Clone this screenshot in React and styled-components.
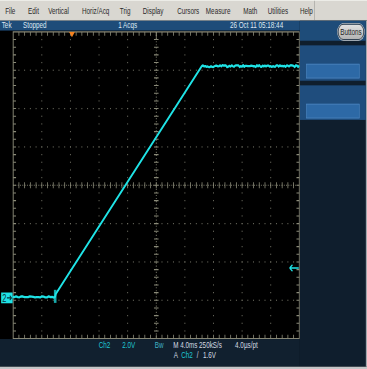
import styled, { createGlobalStyle } from "styled-components";

// the scope screen is drawn at its native 640x480 and squeezed to the window
const SX = 367 / 640;
const SY = 369 / 480;

const GlobalStyle = createGlobalStyle`
  html, body {
    margin: 0;
    padding: 0;
    background: #000;
    overflow: hidden;
  }
  #root {
    width: 367px;
    height: 369px;
    overflow: hidden;
  }
`;

const menu = [
  ["File", 40],
  ["Edit", 35],
  ["Vertical", 59],
  ["Horiz/Acq", 66],
  ["Trig", 40],
  ["Display", 60],
  ["Cursors", 50],
  ["Measure", 65],
  ["Math", 43],
  ["Utilities", 56],
  ["Help", 25],
];

// graticule geometry (svg units = native pixels)
const X0 = 23;
const Y0 = 1.5;
const W = 499;
const H = 399;
const DX = W / 10;
const DY = H / 8;
const CX = X0 + W / 2;
const CY = Y0 + H / 2;

const TRACE = "#1fe3e6";
const GRID = "#8a8a78";
const DOT = "#6c6c60";

const rand = (i) => {
  const s = Math.sin(i * 127.1 + 311.7) * 43758.5453;
  return s - Math.floor(s) - 0.5;
};

const tracePoints = () => {
  const pts = [];
  for (let x = 22; x <= 94; x += 3) pts.push([x, 346.3 + rand(x) * 1.6]);
  pts.push([96, 346], [97.5, 342]);
  pts.push([352, 46]);
  for (let x = 354; x <= 522; x += 2) pts.push([x, 46 + rand(x) * 2.6]);
  return pts.map((p) => p[0].toFixed(1) + "," + p[1].toFixed(1)).join(" ");
};

const Graticule = () => {
  const ticks = [];
  const dots = [];

  for (let i = 1; i < 50; i++) {
    const x = X0 + (i * DX) / 5;
    ticks.push(<line key={"t" + i} x1={x} y1={Y0} x2={x} y2={Y0 + 5} />);
    ticks.push(<line key={"b" + i} x1={x} y1={Y0 + H} x2={x} y2={Y0 + H - 5} />);
    ticks.push(<line key={"ch" + i} x1={x} y1={CY - 4} x2={x} y2={CY + 4} />);
  }
  for (let j = 1; j < 40; j++) {
    const y = Y0 + (j * DY) / 5;
    ticks.push(<line key={"l" + j} x1={X0} y1={y} x2={X0 + 5} y2={y} />);
    ticks.push(<line key={"r" + j} x1={X0 + W} y1={y} x2={X0 + W - 5} y2={y} />);
    ticks.push(<line key={"cv" + j} x1={CX - 4} y1={y} x2={CX + 4} y2={y} />);
  }

  for (let k = 1; k < 10; k++) {
    if (k === 5) continue;
    const x = X0 + k * DX;
    for (let j = 1; j < 40; j++) {
      const y = Y0 + (j * DY) / 5;
      dots.push(<rect key={"dv" + k + "-" + j} x={x - 0.8} y={y - 0.8} width="1.6" height="1.6" />);
    }
  }
  for (let m = 1; m < 8; m++) {
    if (m === 4) continue;
    const y = Y0 + m * DY;
    for (let i = 1; i < 50; i++) {
      const x = X0 + (i * DX) / 5;
      dots.push(<rect key={"dh" + m + "-" + i} x={x - 0.8} y={y - 0.8} width="1.6" height="1.6" />);
    }
  }

  return (
    <Screen viewBox="0 0 523 401">
      <g fill={DOT}>{dots}</g>
      <g stroke={GRID} strokeWidth="1.4">
        {ticks}
        <line x1={CX} y1={Y0} x2={CX} y2={Y0 + H} strokeDasharray="1.5 2.5" />
        <line x1={X0} y1={CY} x2={X0 + W} y2={CY} strokeDasharray="1.5 2.5" />
        <line x1={CX} y1={Y0} x2={CX} y2={Y0 + 9} />
        <rect x={X0} y={Y0} width={W} height={H} fill="none" strokeWidth="1.6" />
      </g>

      {/* trigger position */}
      <polygon points="120.5,1.5 130.5,1.5 125.5,8.5" fill="#f5821f" />

      {/* waveform */}
      <rect x="94" y="337" width="4.5" height="17" fill={TRACE} opacity="0.75" />
      <polyline points={tracePoints()} fill="none" stroke={TRACE} strokeWidth="3" strokeLinejoin="round" />

      {/* channel 2 ground marker */}
      <rect x="2" y="340.5" width="20" height="14" fill={TRACE} />
      <text x="4" y="352.5" fontSize="13" fontFamily="Liberation Sans, Arial, sans-serif" fill="#0a3038">
        2
      </text>
      <path d="M12 347.5 H20 M17 344.5 L20 347.5 L17 350.5" stroke="#0a3038" strokeWidth="1.5" fill="none" />

      {/* trigger level */}
      <path d="M505 308.6 H521 M505 308.6 L510 304.6 M505 308.6 L510 312.6" stroke={TRACE} strokeWidth="2" fill="none" />
    </Screen>
  );
};

const App = () => {
  return (
    <>
      <GlobalStyle />
      <Stage>
        <MenuBar>
          {menu.map(([label, w]) => (
            <MenuItem key={label} $w={w}>
              {label}
            </MenuItem>
          ))}
          <MenuSep />
        </MenuBar>

        <Body>
          <ScreenColumn>
            <StatusBar>
              <StatusItem $w={37}>Tek</StatusItem>
              <StatusItem $w={166}>Stopped</StatusItem>
              <StatusItem $w={195}>1 Acqs</StatusItem>
              <StatusItem>26 Oct 11 05:18:44</StatusItem>
            </StatusBar>
            <Graticule />
            <Readout>
              <ReadoutRow $indent={172}>
                <Field $w={41} $tone="ch">Ch2</Field>
                <Field $w={57} $tone="ch">2.0V</Field>
                <Field $w={32} $tone="bw">Bw</Field>
                <Field $w={108}>M 4.0ms 250kS/s</Field>
                <Field>4.0µs/pt</Field>
              </ReadoutRow>
              <ReadoutRow $indent={303}>
                <Field $w={13}>A</Field>
                <Field $w={27} $tone="ch">Ch2</Field>
                <Field $w={11}>/</Field>
                <Field>1.6V</Field>
              </ReadoutRow>
            </Readout>
          </ScreenColumn>

          <SidePanel>
            <SideTop>
              <Pill>Buttons</Pill>
            </SideTop>
            <SoftKey>
              <SoftField />
            </SoftKey>
            <SoftKey>
              <SoftField />
            </SoftKey>
          </SidePanel>
        </Body>

        <BottomEdge />
      </Stage>
    </>
  );
};

const Stage = styled.div`
  width: 640px;
  height: 480px;
  transform: scale(${SX}, ${SY});
  transform-origin: 0 0;
  display: flex;
  flex-direction: column;
  background: #000;
  font-family: "Liberation Sans", Arial, sans-serif;
  font-size: 11px;
`;

const MenuBar = styled.div`
  height: 27px;
  flex: none;
  box-sizing: border-box;
  display: flex;
  align-items: center;
  padding-left: 9px;
  background: #d9d7d1;
  border-top: 1px solid #f2f2ef;
  border-bottom: 1px solid #8e8e8a;
  color: #2a2a2a;
`;

const MenuItem = styled.span`
  width: ${(p) => p.$w}px;
  flex: none;
  white-space: nowrap;
`;

const MenuSep = styled.span`
  align-self: stretch;
  width: 1px;
  background: #9a9a96;
`;

const Body = styled.div`
  flex: 1;
  display: flex;
  min-height: 0;
`;

const ScreenColumn = styled.div`
  width: 523px;
  flex: none;
  display: flex;
  flex-direction: column;
`;

const StatusBar = styled.div`
  height: 13px;
  flex: none;
  display: flex;
  align-items: center;
  padding-left: 3px;
  background: #1e4c79;
  color: #dfe8f2;
  line-height: 13px;
`;

const StatusItem = styled.span`
  width: ${(p) => (p.$w ? p.$w + "px" : "auto")};
  flex: none;
  white-space: nowrap;
`;

const Screen = styled.svg`
  display: block;
  width: 523px;
  height: 401px;
  flex: none;
  background: #000;
`;

const Readout = styled.div`
  flex: 1;
  box-sizing: border-box;
  padding-top: 2px;
  display: flex;
  flex-direction: column;
  background: #11202f;
`;

const ReadoutRow = styled.div`
  display: flex;
  height: 13px;
  line-height: 13px;
  padding-left: ${(p) => p.$indent}px;
`;

const tones = {
  ch: "#1fc6d4",
  bw: "#3fb2c4",
};

const Field = styled.span`
  width: ${(p) => (p.$w ? p.$w + "px" : "auto")};
  flex: none;
  white-space: nowrap;
  color: ${(p) => tones[p.$tone] || "#d4dbe2"};
`;

const SidePanel = styled.div`
  flex: 1;
  display: flex;
  flex-direction: column;
  background: #0f1e2d;
  border-right: 2px solid #a3a8ae;
`;

const SideTop = styled.div`
  height: 26px;
  flex: none;
  box-sizing: border-box;
  display: flex;
  justify-content: flex-end;
  align-items: flex-start;
  padding: 4px 3px 0 0;
  background: #1e4c79;
`;

const Pill = styled.div`
  width: 46px;
  height: 21px;
  box-sizing: border-box;
  display: flex;
  align-items: center;
  justify-content: center;
  border-radius: 11px;
  border: 1px solid #3a3a3a;
  box-shadow: 0 0 0 1px #d4d4d4;
  background: linear-gradient(#e2e2e2, #b2b2b2);
  color: #222;
  font-size: 11px;
`;

const SoftKey = styled.div`
  height: 45.5px;
  flex: none;
  box-sizing: border-box;
  margin-top: 6px;
  display: flex;
  align-items: flex-end;
  padding: 0 0 2.5px 11px;
  background: #1f4d7d;
`;

const SoftField = styled.div`
  width: 93px;
  height: 19px;
  box-sizing: border-box;
  background: #2d69a6;
  border: 1px solid #4c84bd;
`;

const BottomEdge = styled.div`
  height: 3px;
  flex: none;
  background: #c4c6c8;
`;

export default App;
